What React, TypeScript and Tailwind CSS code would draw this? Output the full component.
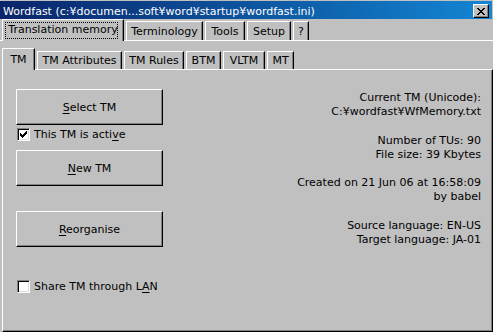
import React from "react";

const outerTabs = [
  { label: "Translation memory", w: "w-[122px]", selected: true },
  { label: "Terminology", w: "w-[77px]" },
  { label: "Tools", w: "w-[40px]" },
  { label: "Setup", w: "w-[44px]" },
  { label: "?", w: "w-[16px]" },
];

const innerTabs = [
  { label: "TM", w: "w-[33px]", selected: true },
  { label: "TM Attributes", w: "w-[85px]" },
  { label: "TM Rules", w: "w-[60px]" },
  { label: "BTM", w: "w-[35px]" },
  { label: "VLTM", w: "w-[42px]" },
  { label: "MT", w: "w-[27px]" },
];

function Tab({
  label,
  w,
  selected,
  outer,
}: {
  label: string;
  w: string;
  selected?: boolean;
  outer?: boolean;
}) {
  if (selected) {
    return (
      <div
        className={`${w} ${outer ? "h-[22px] pt-[3px]" : "h-[22px] pt-[4px]"} relative z-10 -mb-px flex justify-center border-l border-t border-r border-white border-r-black bg-[#c0c0c0] leading-[13px] shadow-[inset_-1px_0_0_#808080]`}
      >
        {label}
        {outer && (
          <span className="absolute left-[2px] right-[5px] top-[2px] bottom-[2px] border border-dotted border-black" />
        )}
      </div>
    );
  }
  return (
    <div
      className={`${w} ${outer ? "h-[19px] pt-[3px]" : "h-[18px] pt-[2px]"} flex justify-center border-l border-t border-r border-white border-r-black leading-[13px] shadow-[inset_-1px_0_0_#808080]`}
    >
      {label}
    </div>
  );
}

function Button({ children }: { children: React.ReactNode }) {
  return (
    <div className="flex h-[36px] w-[147px] items-center justify-center border border-white border-r-black border-b-black leading-[13px] shadow-[inset_-1px_-1px_0_#808080]">
      {children}
    </div>
  );
}

function Checkbox({ checked }: { checked?: boolean }) {
  return (
    <div className="h-[13px] w-[13px] shrink-0 border border-[#808080] border-r-white border-b-white bg-white shadow-[inset_1px_1px_0_#000,inset_-1px_-1px_0_#dfdfdf]">
      {checked && (
        <svg width="11" height="11" viewBox="0 0 11 11" shapeRendering="crispEdges">
          <g fill="#000">
            <rect x="2" y="4" width="1" height="3" />
            <rect x="3" y="5" width="1" height="3" />
            <rect x="4" y="6" width="1" height="3" />
            <rect x="5" y="5" width="1" height="3" />
            <rect x="6" y="4" width="1" height="3" />
            <rect x="7" y="3" width="1" height="3" />
            <rect x="8" y="2" width="1" height="3" />
          </g>
        </svg>
      )}
    </div>
  );
}

export default function App() {
  return (
    <div className="flex h-[332px] w-[493px] flex-col overflow-hidden bg-[#c0c0c0] font-['DejaVu_Sans',sans-serif] text-[11px] text-black">
      {/* title bar */}
      <div className="mt-px mr-px flex h-[18px] shrink-0 items-start bg-gradient-to-r from-[#0a246a] to-[#1486d4] pl-[3px] pr-[3px] text-white">
        <span className="pt-[4px] leading-[13px]">
          Wordfast (c:¥documen...soft¥word¥startup¥wordfast.ini)
        </span>
        <div className="ml-auto mt-[3px] flex h-[14px] w-[16px] items-center justify-center border border-white border-r-black border-b-black bg-[#c0c0c0] shadow-[inset_-1px_-1px_0_#808080]">
          <svg width="8" height="7" viewBox="0 0 8 7" shapeRendering="crispEdges">
            <path d="M0 0h2v1h-2zM6 0h2v1h-2zM1 1h2v1h-2zM5 1h2v1h-2zM2 2h4v1h-4zM3 3h2v1h-2zM2 4h4v1h-4zM1 5h2v1h-2zM5 5h2v1h-2zM0 6h2v1h-2zM6 6h2v1h-2z" fill="#000" />
          </svg>
        </div>
      </div>

      {/* outer tabs */}
      <div className="flex h-[21px] shrink-0 items-end gap-[2px] pl-[2px]">
        {outerTabs.map((t) => (
          <Tab key={t.label} {...t} outer />
        ))}
      </div>

      <div className="flex flex-1 flex-col border-t border-white pl-[2px] pt-[7px]">
        {/* inner tabs */}
        <div className="flex h-[21px] shrink-0 items-end gap-[2px]">
          {innerTabs.map((t) => (
            <Tab key={t.label} {...t} />
          ))}
        </div>

        <div className="flex flex-1 border border-white border-r-black border-b-black shadow-[inset_-1px_-1px_0_#808080]">
          <div className="flex flex-col pl-[13px] pt-[19px]">
            <Button>
              <span>
                <span className="underline underline-offset-2">S</span>elect TM
              </span>
            </Button>
            <div className="ml-px mt-[3px] flex h-[13px] items-center gap-[4px] leading-[13px]">
              <Checkbox checked />
              <span>
                This TM is acti<span className="underline underline-offset-2">v</span>e
              </span>
            </div>
            <div className="mt-[9px]">
              <Button>
                <span>
                  <span className="underline underline-offset-2">N</span>ew TM
                </span>
              </Button>
            </div>
            <div className="mt-[25px]">
              <Button>
                <span>
                  <span className="underline underline-offset-2">R</span>eorganise
                </span>
              </Button>
            </div>
            <div className="ml-px mt-[33px] flex h-[13px] items-center gap-[4px] leading-[13px]">
              <Checkbox />
              <span>
                Share TM through L<span className="underline underline-offset-2">A</span>N
              </span>
            </div>
          </div>

          <div className="flex flex-1 flex-col items-end pr-[11px] pt-[21px] leading-[14.2px]">
            <div>Current TM (Unicode):</div>
            <div>C:¥wordfast¥WfMemory.txt</div>
            <div className="mt-[14.2px]">Number of TUs: 90</div>
            <div>File size: 39 Kbytes</div>
            <div className="mt-[14.2px]">Created on 21 Jun 06 at 16:58:09</div>
            <div>by babel</div>
            <div className="mt-[14.2px]">Source language: EN-US</div>
            <div>Target language: JA-01</div>
          </div>
        </div>
      </div>
    </div>
  );
}
